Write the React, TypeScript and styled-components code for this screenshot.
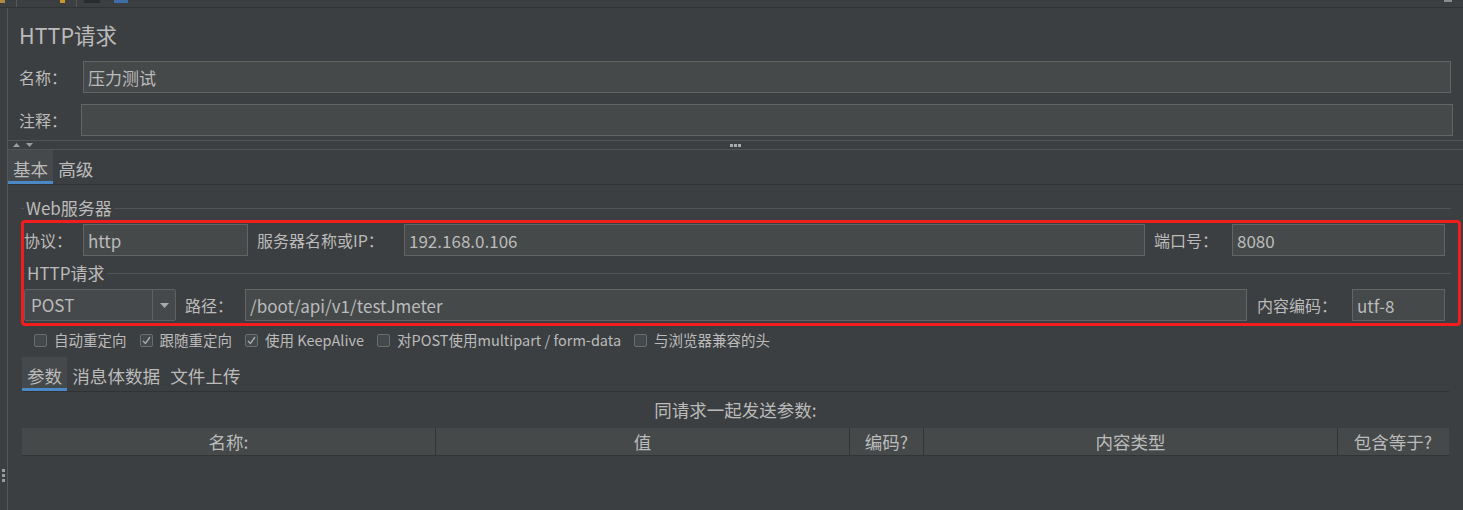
import React from "react";
import styled, { createGlobalStyle } from "styled-components";

const GlobalStyle = createGlobalStyle`
  html, body {
    margin: 0;
    padding: 0;
    background: #3c3f41;
  }
  body {
    font-family: "Noto Sans CJK SC", "Microsoft YaHei", sans-serif;
    color: #bbbbbb;
  }
`;

const Page = styled.div`
  width: 1463px;
  height: 510px;
  overflow: hidden;
  display: flex;
  flex-direction: column;
  background: #3c3f41;
`;

const TopStrip = styled.div`
  height: 7px;
  flex: none;
  display: flex;
  align-items: flex-start;
  border-bottom: 1px solid #303234;
`;

const StripBit = styled.span<{ $w: number; $color: string; $ml: number; $h?: number }>`
  width: ${(p) => p.$w}px;
  height: ${(p) => p.$h ?? 3}px;
  margin-left: ${(p) => p.$ml}px;
  background: ${(p) => p.$color};
`;

const Body = styled.div`
  flex: 1;
  display: flex;
  min-height: 0;
`;

const LeftRail = styled.div`
  width: 8px;
  flex: none;
  border-right: 1px solid #55585a;
  display: flex;
  flex-direction: column;
  justify-content: flex-end;
  align-items: center;
  gap: 2px;
  padding-bottom: 28px;
  box-sizing: border-box;
`;

const RailDot = styled.span`
  width: 3px;
  height: 3px;
  background: #9a9c9e;
`;

const Main = styled.div`
  flex: 1;
  display: flex;
  flex-direction: column;
  min-width: 0;
`;

const Title = styled.div`
  margin: 12px 0 0 11px;
  font-size: 21.5px;
  line-height: 30px;
  height: 30px;
`;

const FormRow = styled.div<{ $labelWidth: number; $right: number; $top: number }>`
  display: flex;
  align-items: center;
  margin: ${(p) => p.$top}px ${(p) => p.$right}px 0 11px;

  & > label {
    width: ${(p) => p.$labelWidth}px;
    flex: none;
  }
`;

const Label = styled.label<{ $width?: number }>`
  font-size: 16px;
  line-height: 20px;
  white-space: nowrap;
  flex: none;
  ${(p) => (p.$width ? `width: ${p.$width}px;` : "")}
`;

const Field = styled.input<{ $width?: number }>`
  box-sizing: border-box;
  height: 32px;
  ${(p) => (p.$width ? `width: ${p.$width}px; flex: none;` : "flex: 1; min-width: 0;")}
  background: #45494a;
  border: 1px solid #646464;
  color: #bbbbbb;
  font-family: inherit;
  font-size: 17px;
  padding: 0 4px;
  margin: 0;
  outline: none;
`;

const Splitter = styled.div`
  margin-top: 4px;
  height: 8px;
  border-top: 1px solid #515456;
  border-bottom: 1px solid #515456;
  display: grid;
  grid-template-columns: 1fr auto 1fr;
  align-items: center;
`;

const Arrows = styled.div`
  display: flex;
  gap: 6px;
  padding-left: 5px;
`;

const Dots = styled.div`
  display: flex;
  gap: 1px;
`;

const Dot = styled.span`
  width: 3px;
  height: 3px;
  background: #a9abad;
`;

const TabBar = styled.div<{ $mx: number; $mt: number }>`
  display: flex;
  height: 34px;
  margin: ${(p) => p.$mt}px ${(p) => p.$mx}px 0;
  border-bottom: 1px solid #303234;
`;

const Tab = styled.div<{ $active?: boolean }>`
  box-sizing: border-box;
  height: 34px;
  padding: 4px 5px 0;
  font-size: 17.6px;
  line-height: 30px;
  background: ${(p) => (p.$active ? "#45494b" : "transparent")};
  border-bottom: 3px solid ${(p) => (p.$active ? "#4a88c7" : "transparent")};
`;

const GroupTitle = styled.div<{ $ml: number; $mr: number; $mt: number; $lead: number }>`
  display: flex;
  align-items: center;
  gap: 2px;
  height: 20px;
  margin: ${(p) => p.$mt}px ${(p) => p.$mr}px 0 ${(p) => p.$ml}px;
  font-size: 17px;
  line-height: 20px;

  &::before {
    content: "";
    width: ${(p) => p.$lead}px;
    height: 1px;
    background: #515456;
  }
  &::after {
    content: "";
    flex: 1;
    height: 1px;
    background: #515456;
  }
`;

const Highlight = styled.div`
  margin: 2px 2px 0 13px;
  border: 3px solid #f41d1d;
  border-radius: 4px;
  padding: 1px 13px 2px 0;
`;

const InlineRow = styled.div<{ $top?: number }>`
  display: flex;
  align-items: center;
  margin-top: ${(p) => p.$top ?? 0}px;
`;

const Gap = styled.span<{ $w: number }>`
  width: ${(p) => p.$w}px;
  flex: none;
`;

const Combo = styled.div`
  box-sizing: border-box;
  width: 152px;
  height: 32px;
  flex: none;
  display: flex;
  background: #46494b;
  border: 1px solid #5e6162;
  border-radius: 2px;
`;

const ComboText = styled.div`
  flex: 1;
  font-size: 17px;
  line-height: 30px;
  padding-left: 6px;
`;

const ComboArrow = styled.div`
  width: 22px;
  border-left: 1px solid #5e6162;
  display: flex;
  align-items: center;
  justify-content: center;
`;

const CheckRow = styled.div`
  display: flex;
  align-items: center;
  height: 20px;
  margin: 4px 0 0 26px;
`;

const CheckItem = styled.div`
  display: flex;
  align-items: center;
  gap: 7px;
  margin-right: 13px;
  font-size: 14.5px;
  line-height: 20px;
  white-space: nowrap;
`;

const Box = styled.span`
  box-sizing: border-box;
  width: 13px;
  height: 13px;
  border: 1px solid #6b6e70;
  border-radius: 2px;
  background: #43494a;
  display: flex;
  align-items: center;
  justify-content: center;
`;

const Caption = styled.div`
  margin: 7px 14px 0;
  text-align: center;
  font-size: 17.5px;
  line-height: 22px;
`;

const Header = styled.div`
  margin: 7px 14px 0;
  display: grid;
  grid-template-columns: 413px 414px 74px 414px 111px;
  height: 27px;
  background: #45494a;
  border-bottom: 1px solid #323436;
`;

const HeaderCell = styled.div`
  text-align: center;
  font-size: 17.5px;
  line-height: 28px;
  & + & {
    border-left: 1px solid #323436;
  }
`;

const Check = ({ checked, label }: { checked?: boolean; label: string }) => (
  <CheckItem>
    <Box>
      {checked && (
        <svg width="9" height="9" viewBox="0 0 9 9">
          <polyline points="1,5 3.5,7.5 8,1" fill="none" stroke="#a8aaac" strokeWidth="1.4" />
        </svg>
      )}
    </Box>
    {label}
  </CheckItem>
);

export default function App() {
  return (
    <Page>
      <GlobalStyle />
      <TopStrip>
        <StripBit $w={5} $color="#b08a45" $ml={0} />
        <StripBit $w={1} $h={7} $color="#55585a" $ml={11} />
        <StripBit $w={5} $color="#c9962e" $ml={43} />
        <StripBit $w={1} $h={7} $color="#55585a" $ml={11} />
        <StripBit $w={16} $color="#2b2b2b" $ml={7} />
        <StripBit $w={14} $color="#3d6ea8" $ml={14} />
        <StripBit $w={8} $h={2} $color="#8a8c8e" $ml={1316} />
      </TopStrip>
      <Body>
        <LeftRail>
          <RailDot />
          <RailDot />
          <RailDot />
        </LeftRail>
        <Main>
          <Title>HTTP请求</Title>
          <FormRow $labelWidth={64} $right={12} $top={11}>
            <Label>名称：</Label>
            <Field readOnly defaultValue="压力测试" />
          </FormRow>
          <FormRow $labelWidth={62} $right={10} $top={11}>
            <Label>注释：</Label>
            <Field readOnly defaultValue="" />
          </FormRow>
          <Splitter>
            <Arrows>
              <svg width="7" height="4" viewBox="0 0 7 4">
                <polygon points="0,4 3.5,0 7,4" fill="#9a9c9e" />
              </svg>
              <svg width="7" height="4" viewBox="0 0 7 4">
                <polygon points="0,0 7,0 3.5,4" fill="#9a9c9e" />
              </svg>
            </Arrows>
            <Dots>
              <Dot />
              <Dot />
              <Dot />
            </Dots>
            <span />
          </Splitter>
          <TabBar $mx={0} $mt={0}>
            <Tab $active>基本</Tab>
            <Tab>高级</Tab>
          </TabBar>

          <GroupTitle $ml={13} $mr={12} $mt={13} $lead={3}>
            Web服务器
          </GroupTitle>
          <Highlight>
            <InlineRow>
              <Label $width={59}>协议：</Label>
              <Field $width={165} readOnly defaultValue="http" />
              <Gap $w={9} />
              <Label $width={147}>服务器名称或IP：</Label>
              <Field readOnly defaultValue="192.168.0.106" />
              <Gap $w={9} />
              <Label $width={78}>端口号：</Label>
              <Field $width={213} readOnly defaultValue="8080" />
            </InlineRow>
            <GroupTitle $ml={0} $mr={-6} $mt={7} $lead={1}>
              HTTP请求
            </GroupTitle>
            <InlineRow $top={6}>
              <Combo>
                <ComboText>POST</ComboText>
                <ComboArrow>
                  <svg width="9" height="5" viewBox="0 0 9 5">
                    <polygon points="0,0 9,0 4.5,5" fill="#a8aaac" />
                  </svg>
                </ComboArrow>
              </Combo>
              <Gap $w={9} />
              <Label $width={60}>路径：</Label>
              <Field readOnly defaultValue="/boot/api/v1/testJmeter" />
              <Gap $w={10} />
              <Label $width={95}>内容编码：</Label>
              <Field $width={93} readOnly defaultValue="utf-8" />
            </InlineRow>
          </Highlight>

          <CheckRow>
            <Check label="自动重定向" />
            <Check checked label="跟随重定向" />
            <Check checked label="使用 KeepAlive" />
            <Check label="对POST使用multipart / form-data" />
            <Check label="与浏览器兼容的头" />
          </CheckRow>

          <TabBar $mx={14} $mt={7}>
            <Tab $active>参数</Tab>
            <Tab>消息体数据</Tab>
            <Tab>文件上传</Tab>
          </TabBar>

          <Caption>同请求一起发送参数:</Caption>
          <Header>
            <HeaderCell>名称:</HeaderCell>
            <HeaderCell>值</HeaderCell>
            <HeaderCell>编码?</HeaderCell>
            <HeaderCell>内容类型</HeaderCell>
            <HeaderCell>包含等于?</HeaderCell>
          </Header>
        </Main>
      </Body>
    </Page>
  );
}
